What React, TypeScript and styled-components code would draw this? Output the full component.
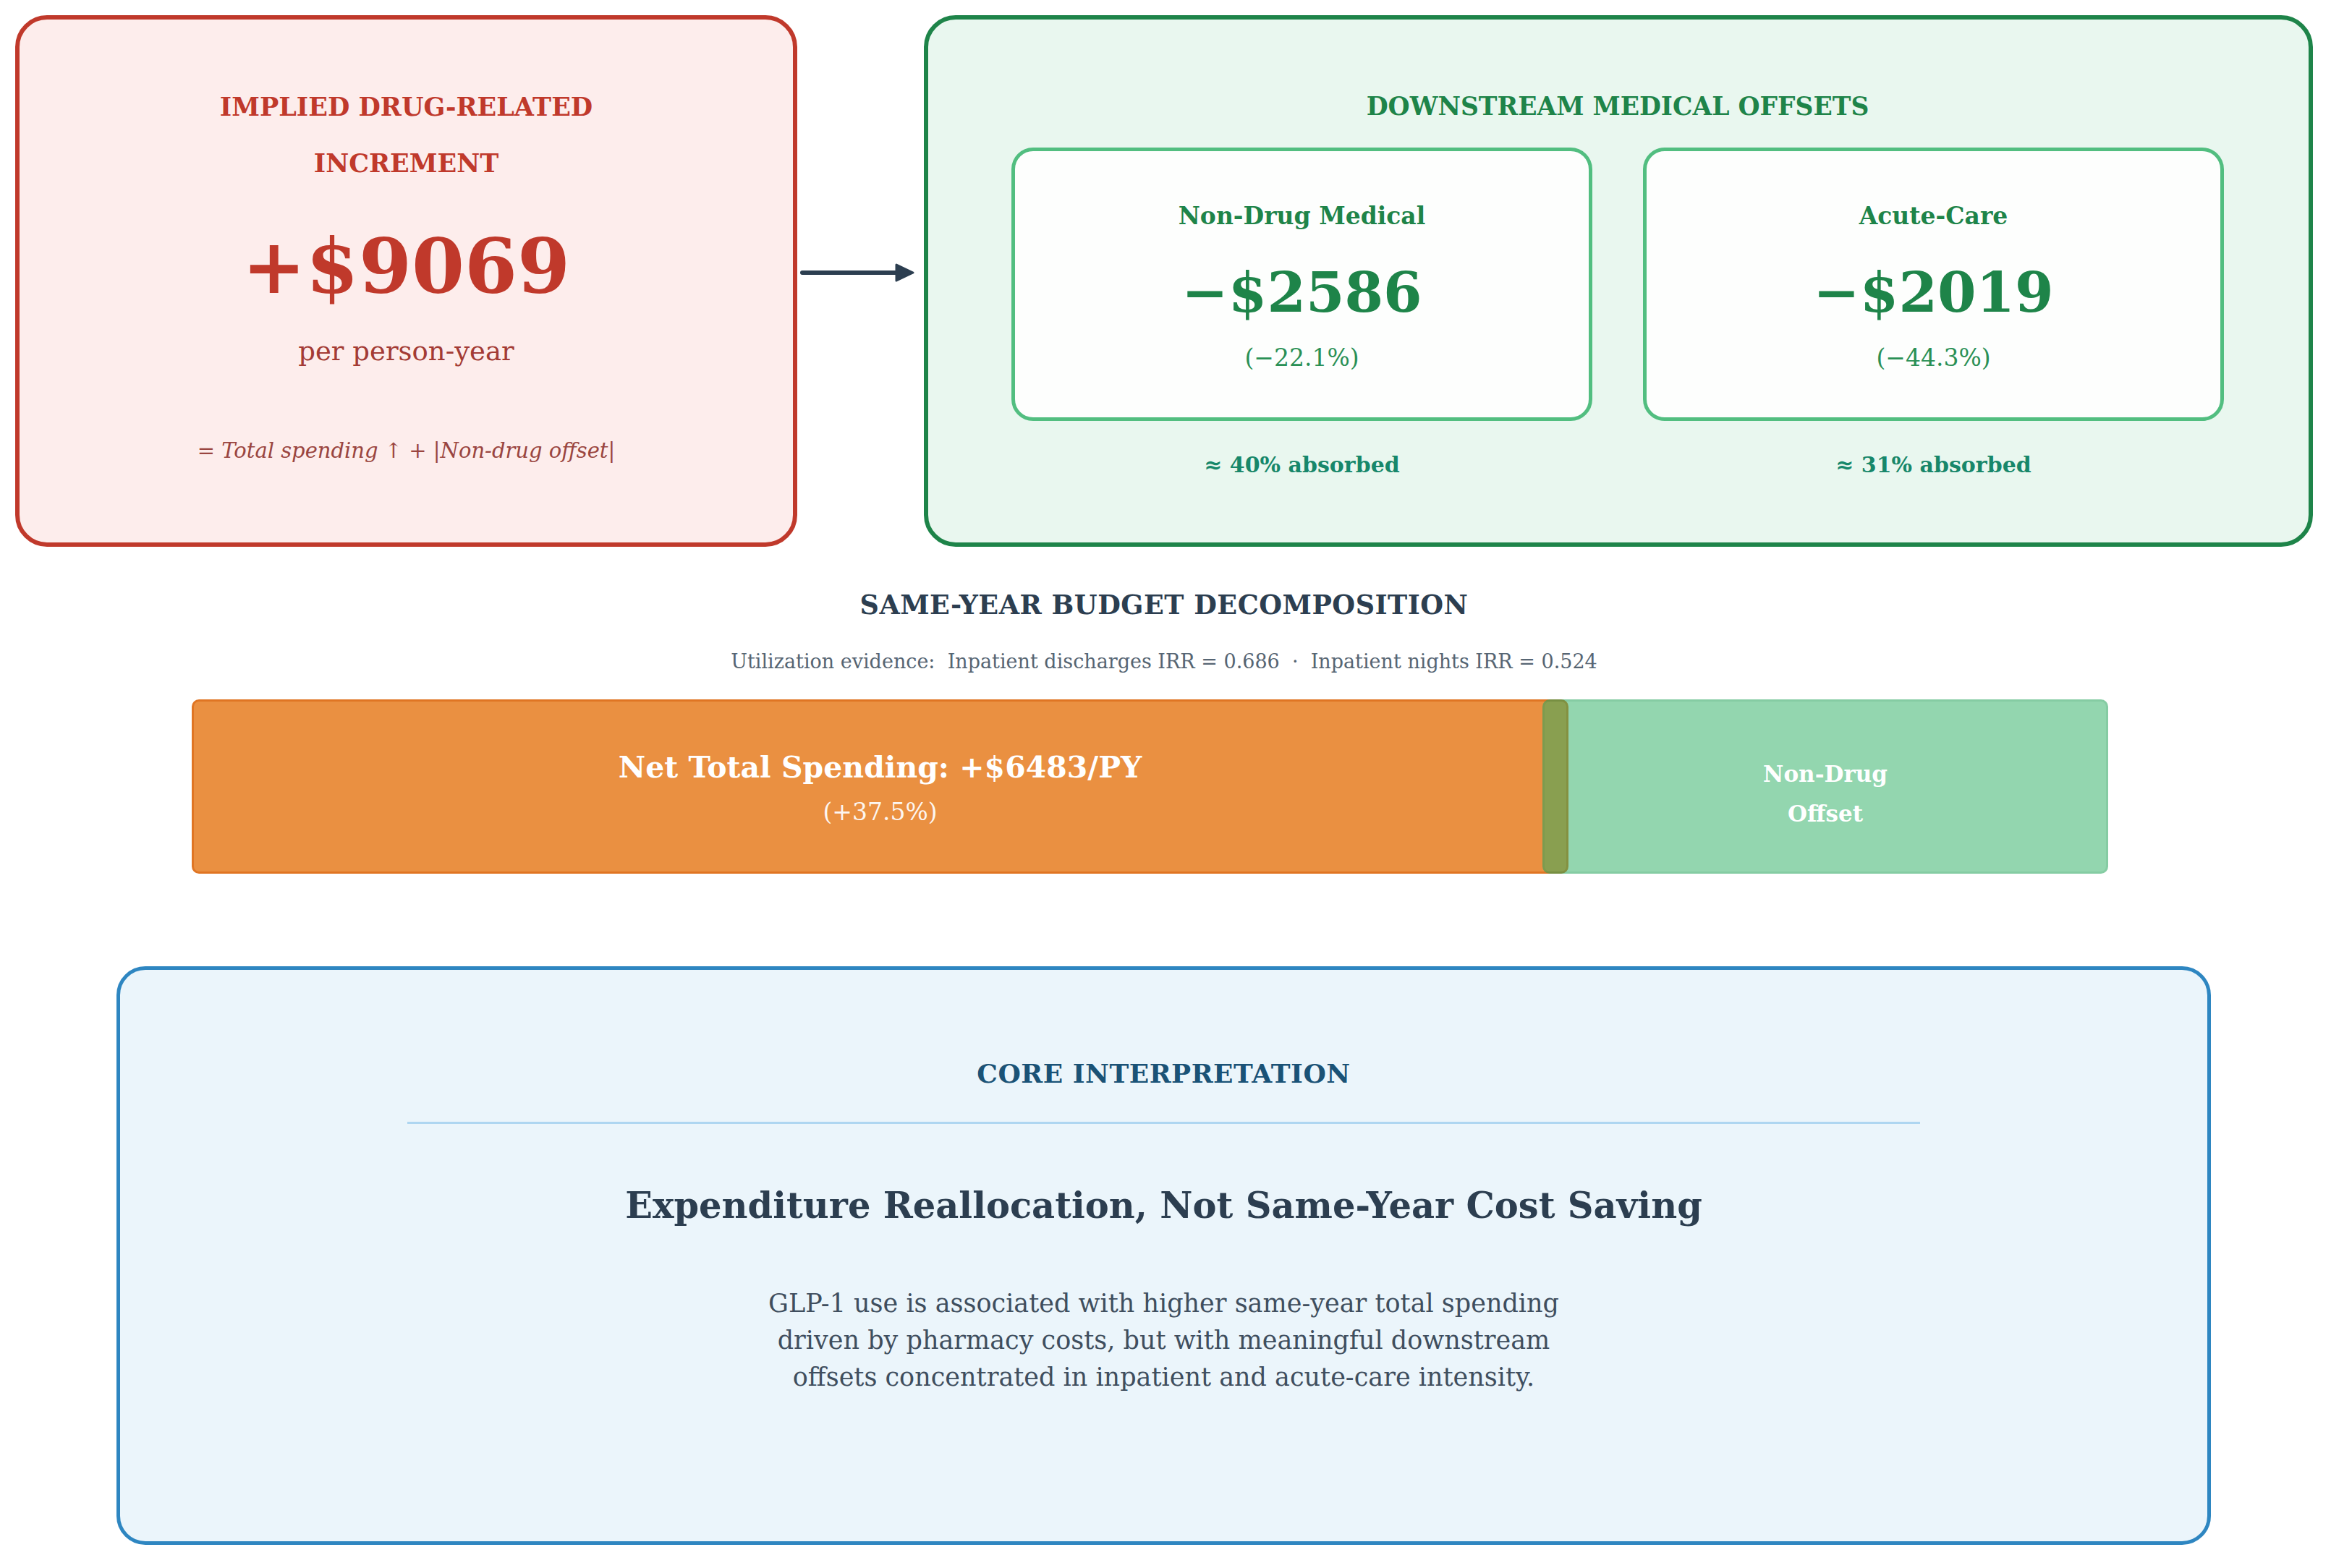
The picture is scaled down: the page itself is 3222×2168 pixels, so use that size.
import React from 'react';
import styled, { createGlobalStyle } from 'styled-components';

const GlobalStyle = createGlobalStyle`
  html, body {
    margin: 0;
    padding: 0;
    background: #ffffff;
  }
  body {
    font-family: "DejaVu Serif", "Liberation Serif", serif;
  }
`;

const Page = styled.div`
  width: 3176px;
  padding: 21px 0 0 21px;
`;

/* ---------- top row ---------- */

const TopRow = styled.div`
  display: flex;
  height: 735px;
`;

const Panel = styled.section<{ $border: string; $bg: string }>`
  box-sizing: border-box;
  border: 6px solid ${(p) => p.$border};
  border-radius: 44px;
  background: ${(p) => p.$bg};
  display: flex;
  flex-direction: column;
  align-items: center;
`;

const IncrementPanel = styled(Panel)`
  width: 1081px;
  padding-top: 82px;
`;

const OffsetsPanel = styled(Panel)`
  flex: 1;
  align-items: stretch;
  padding: 95px 117px 0 115px;
`;

const ArrowSlot = styled.div`
  box-sizing: border-box;
  width: 175px;
  display: flex;
  align-items: center;
  padding-bottom: 23px;
`;

const PanelTitle = styled.div<{ $color: string; $lh?: number; $size?: number; $spacing?: number }>`
  font-size: ${(p) => p.$size ?? 36}px;
  font-weight: 700;
  letter-spacing: ${(p) => p.$spacing ?? 0.5}px;
  line-height: ${(p) => p.$lh ?? 50}px;
  color: ${(p) => p.$color};
  text-align: center;
  text-transform: uppercase;
`;

const BigFigure = styled.div`
  margin-top: 40px;
  font-size: 105px;
  font-weight: 700;
  line-height: 126px;
  color: #c0392b;
`;

const PerUnit = styled.div`
  margin-top: 30px;
  font-size: 37px;
  line-height: 50px;
  color: #a33b35;
`;

const Formula = styled.div`
  margin-top: 92px;
  font-size: 29px;
  font-style: italic;
  line-height: 40px;
  color: #9a4540;
`;

const CardGrid = styled.div`
  display: grid;
  grid-template-columns: 1fr 1fr;
  column-gap: 70px;
  margin-top: 32px;
`;

const OffsetColumn = styled.div`
  display: flex;
  flex-direction: column;
  align-items: stretch;
`;

const OffsetCard = styled.div`
  border: 5px solid #52be80;
  border-radius: 30px;
  background: #fdfefd;
  padding: 68px 0 62px;
  display: flex;
  flex-direction: column;
  align-items: center;
`;

const CardLabel = styled.div`
  font-size: 33px;
  font-weight: 700;
  line-height: 44px;
  color: #1e8449;
`;

const CardValue = styled.div`
  margin-top: 37px;
  font-size: 77px;
  font-weight: 700;
  line-height: 92px;
  color: #1e8449;
`;

const CardPct = styled.div`
  margin-top: 25px;
  font-size: 33px;
  line-height: 40px;
  color: #2a9055;
`;

const Absorbed = styled.div`
  margin-top: 41px;
  font-size: 30px;
  font-weight: 700;
  line-height: 40px;
  color: #17876a;
  text-align: center;
`;

/* ---------- budget bar ---------- */

const SectionTitle = styled(PanelTitle)`
  margin-top: 56px;
`;

const Evidence = styled.div`
  margin-top: 35px;
  font-size: 27px;
  line-height: 36px;
  color: #566573;
  text-align: center;
  white-space: pre;
`;

const BudgetBar = styled.div`
  display: flex;
  width: 2649px;
  height: 241px;
  margin: 34px 0 0 244px;
`;

const Segment = styled.div<{ $bg: string; $border: string }>`
  box-sizing: border-box;
  height: 100%;
  border: 3px solid ${(p) => p.$border};
  border-radius: 10px;
  background: ${(p) => p.$bg};
  display: flex;
  flex-direction: column;
  align-items: center;
  justify-content: center;
  color: #ffffff;
  text-align: center;
`;

const NetSegment = styled(Segment)`
  width: 71.84%;
  padding-top: 8px;
`;

const OffsetSegment = styled(Segment)`
  flex: 1;
  margin-left: -36px;
  padding-top: 20px;
`;

const NetLabel = styled.div`
  font-size: 41px;
  font-weight: 700;
  line-height: 62px;
`;

const NetPct = styled.div`
  font-size: 33px;
  line-height: 62px;
  opacity: 0.92;
`;

const OffsetLabel = styled.div`
  font-size: 31px;
  font-weight: 700;
  line-height: 55px;
`;

/* ---------- interpretation ---------- */

const InterpretationPanel = styled(Panel)`
  border-width: 5px;
  border-radius: 40px;
  width: 2895px;
  height: 800px;
  margin: 128px 0 0 140px;
  padding-top: 118px;
`;

const Divider = styled.div`
  width: 2091px;
  height: 3px;
  margin-top: 42px;
  background: #aed6f1;
`;

const Headline = styled.div`
  margin-top: 81px;
  font-size: 49.5px;
  font-weight: 700;
  line-height: 64px;
  color: #2c3e50;
`;

const Paragraph = styled.p`
  margin: 78px 0 0;
  font-size: 35px;
  line-height: 51px;
  color: #3f4e5e;
  text-align: center;
`;

const RightArrow = () => (
  <svg width="175" height="40" viewBox="0 0 175 40">
    <line x1="7" y1="20" x2="142" y2="20" stroke="#2c3e50" strokeWidth="6" strokeLinecap="round" />
    <path d="M137 9 L160 20 L137 31 Z" fill="#2c3e50" stroke="#2c3e50" strokeWidth="3" strokeLinejoin="round" />
  </svg>
);

const offsets = [
  { label: 'Non-Drug Medical', value: '−$2586', pct: '(−22.1%)', absorbed: '≈ 40% absorbed' },
  { label: 'Acute-Care', value: '−$2019', pct: '(−44.3%)', absorbed: '≈ 31% absorbed' },
];

export default function App() {
  return (
    <>
      <GlobalStyle />
      <Page>
        <TopRow>
          <IncrementPanel $border="#c0392b" $bg="#fdedec">
            <PanelTitle $color="#c0392b" $lh={78} $size={35} $spacing={0}>
              Implied Drug-Related
              <br />
              Increment
            </PanelTitle>
            <BigFigure>+$9069</BigFigure>
            <PerUnit>per person-year</PerUnit>
            <Formula>= Total spending ↑ + |Non-drug offset|</Formula>
          </IncrementPanel>

          <ArrowSlot>
            <RightArrow />
          </ArrowSlot>

          <OffsetsPanel $border="#1e8449" $bg="#e9f7ef">
            <PanelTitle $color="#1e8449" $size={34.5} $spacing={0}>
              Downstream Medical Offsets
            </PanelTitle>
            <CardGrid>
              {offsets.map((o) => (
                <OffsetColumn key={o.label}>
                  <OffsetCard>
                    <CardLabel>{o.label}</CardLabel>
                    <CardValue>{o.value}</CardValue>
                    <CardPct>{o.pct}</CardPct>
                  </OffsetCard>
                  <Absorbed>{o.absorbed}</Absorbed>
                </OffsetColumn>
              ))}
            </CardGrid>
          </OffsetsPanel>
        </TopRow>

        <SectionTitle $color="#2c3e50" $size={36.5}>Same-Year Budget Decomposition</SectionTitle>
        <Evidence>{'Utilization evidence:  Inpatient discharges IRR = 0.686  ·  Inpatient nights IRR = 0.524'}</Evidence>

        <BudgetBar>
          <NetSegment $bg="rgba(230, 126, 34, 0.86)" $border="rgba(211, 84, 0, 0.45)">
            <NetLabel>Net Total Spending: +$6483/PY</NetLabel>
            <NetPct>(+37.5%)</NetPct>
          </NetSegment>
          <OffsetSegment $bg="rgba(39, 174, 96, 0.5)" $border="rgba(30, 132, 73, 0.12)">
            <OffsetLabel>
              Non-Drug
              <br />
              Offset
            </OffsetLabel>
          </OffsetSegment>
        </BudgetBar>

        <InterpretationPanel $border="#2e86c1" $bg="#ebf5fb">
          <PanelTitle $color="#1a5276">Core Interpretation</PanelTitle>
          <Divider />
          <Headline>Expenditure Reallocation, Not Same-Year Cost Saving</Headline>
          <Paragraph>
            GLP-1 use is associated with higher same-year total spending
            <br />
            driven by pharmacy costs, but with meaningful downstream
            <br />
            offsets concentrated in inpatient and acute-care intensity.
          </Paragraph>
        </InterpretationPanel>
      </Page>
    </>
  );
}
